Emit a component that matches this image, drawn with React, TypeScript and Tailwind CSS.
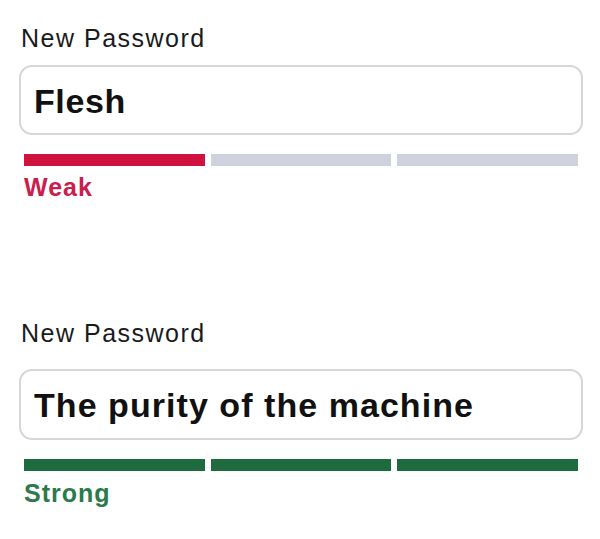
import React from "react";

type Strength = "weak" | "strong";

function Field({
  value,
  strength,
  labelGap,
  boxH,
  valueTrack,
}: {
  value: string;
  strength: Strength;
  labelGap: string;
  boxH: string;
  valueTrack: string;
}) {
  const filled = strength === "weak" ? 1 : 3;
  const barColor = strength === "weak" ? "bg-[#d0123f]" : "bg-[#1f6b40]";
  return (
    <div className="flex flex-col">
      <div
        className={`text-[25px] leading-[25px] tracking-[1.5px] text-[#1a1a1a] pl-[2px] ${labelGap}`}
      >
        New Password
      </div>
      <div
        className={`${boxH} rounded-[13px] border-2 border-[#d6d6db] bg-white pl-[13px] pt-[17px]`}
      >
        <div
          className={`text-[34px] leading-[34px] font-bold ${valueTrack} text-[#111111]`}
        >
          {value}
        </div>
      </div>
      <div className="mt-[19px] mx-[5px] grid grid-cols-3 gap-[6px]">
        {[0, 1, 2].map((i) => (
          <div
            key={i}
            className={`h-[12px] ${i < filled ? barColor : "bg-[#cdd2dd]"}`}
          />
        ))}
      </div>
      {strength === "weak" ? (
        <div className="mt-[9px] pl-[5px] text-[25px] leading-[25px] font-bold tracking-[1px] text-[#c6214d]">
          Weak
        </div>
      ) : (
        <div className="mt-[10px] pl-[5px] text-[25px] leading-[25px] font-bold tracking-[1px] text-[#2c7a4c]">
          Strong
        </div>
      )}
    </div>
  );
}

export default function App() {
  return (
    <div
      className="w-[600px] h-[539px] bg-white overflow-hidden pl-[19px] pr-[17px]"
      style={{ fontFamily: '"Liberation Sans", Arial, sans-serif' }}
    >
      <div className="pt-[26px]">
        <Field
          value="Flesh"
          strength="weak"
          labelGap="mb-[14px]"
          boxH="h-[70px]"
          valueTrack="tracking-[0.6px]"
        />
      </div>
      <div className="pt-[121px]">
        <Field
          value="The purity of the machine"
          strength="strong"
          labelGap="mb-[23px]"
          boxH="h-[71px]"
          valueTrack="tracking-[1.05px]"
        />
      </div>
    </div>
  );
}
